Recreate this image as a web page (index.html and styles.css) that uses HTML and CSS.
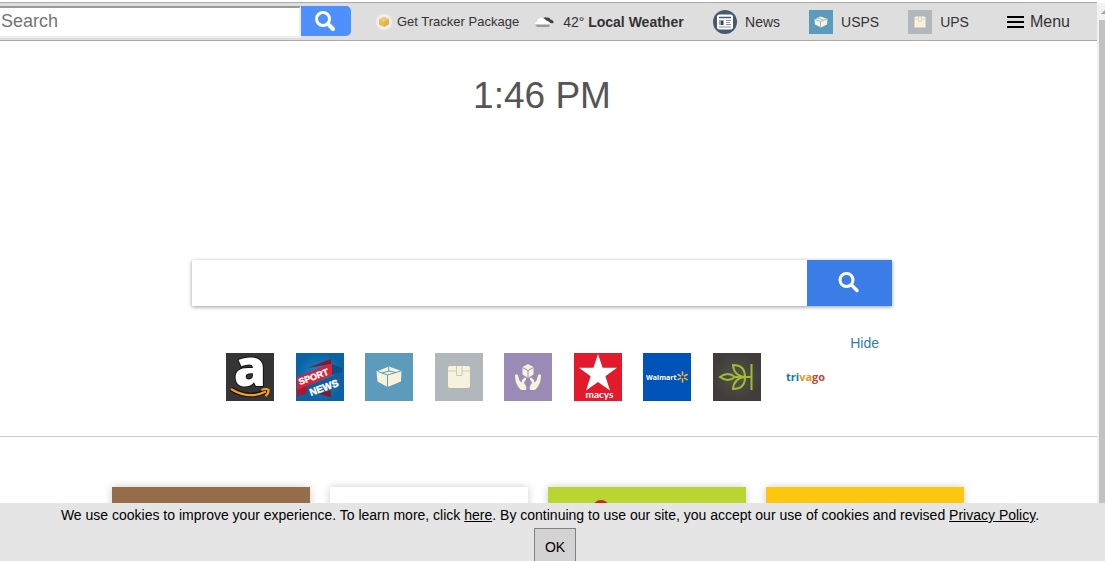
FILE: index.html
```html
<!DOCTYPE html>
<html lang="en">
<head>
<meta charset="utf-8">
<title>Package Tracker</title>
<link rel="stylesheet" href="styles.css">
</head>
<body>
<div class="window">
  <div class="page">
    <header class="toolbar">
      <form class="bar-search">
        <input class="bar-input" type="text" placeholder="Search" aria-label="Search">
        <button class="bar-button" type="button" aria-label="Search">
          <svg width="22" height="22" viewBox="1 0 22 22" fill="none" stroke="#fff" stroke-linecap="round"><circle cx="9" cy="9" r="6.500" stroke-width="3"/><path d="M14 14l5 5" stroke-width="4"/></svg>
        </button>
      </form>
      <a class="item tracker" href="#">
        <svg width="16" height="16" viewBox="0 0 16 16"><circle cx="8" cy="8" r="8" fill="#eee"/><path d="M3 5.500L8 3l5 2.200v5L8 13l-5-2.500z" fill="#e9bd55"/><path d="M3 5.500L8 3l5 2.200L8 8z" fill="#f0ca72"/><path d="M8 8v5l5-2.800v-5z" fill="#e3b14b"/></svg>
        <span>Get Tracker Package</span>
      </a>
      <a class="item weather" href="#">
        <svg width="21" height="14" viewBox="0 0 21 14"><path d="M9 4Q10 1.500 12.500 2.500Q16 2 16.500 4.500Q20 5 19.500 8Q17 9 15 7z" fill="#444"/><path d="M1 10Q0 7.500 3 7Q3 3.500 7.500 3Q11 3 12 5.500Q16 6 16 10z" fill="#fff"/><path d="M1 9.500h15l-1 2.500H3z" fill="#999"/></svg>
        <span>42° <b>Local Weather</b></span>
      </a>
      <nav class="links">
        <a class="item" href="#">
          <svg width="24" height="24" viewBox="0 0 24 24"><circle cx="12" cy="12" r="12" fill="#475873"/><rect x="4" y="4.500" width="16" height="15" rx="2.500" fill="#fff"/><path d="M6 7.500h12" stroke="#475873" stroke-width="1.500"/><path d="M13 10.500h5M13 12.500h4M13 14.500h5M6 17h12" stroke="#8792a3" stroke-width="1"/><path d="M6 10h5v5H6z" fill="#9aa5b5"/><path d="M8 11h2v4H8z" fill="#36455d"/></svg>
          <span>News</span>
        </a>
        <a class="item" href="#">
          <svg width="24" height="24" viewBox="0 0 48 48"><path fill="#5c9bbc" d="M0 0h48v48H0z"/><path d="M11 19l12-6 14 5-1 11-12 6-12-6z" fill="#f7f2dc"/><path d="M11 19l12 4 14-5M23 22v12M17 16l12 4" stroke="#9cbfc9" stroke-width="2" fill="none"/></svg>
          <span>USPS</span>
        </a>
        <a class="item" href="#">
          <svg width="24" height="24" viewBox="0 0 48 48"><path fill="#b1b7bb" d="M0 0h48v48H0z"/><rect x="13" y="13" width="22" height="22" rx="2" fill="#f7f2dc"/><path d="M13 18h8v5h6v-5h8M21 13v5M27 13v5" fill="none" stroke="#d2d1c7" stroke-width="1.500"/></svg>
          <span>UPS</span>
        </a>
      </nav>
      <button class="menu" type="button">
        <svg width="17" height="14" viewBox="0 0 17 14" fill="#000"><path d="M0 1h17v2H0zM0 6h17v2H0zM0 11h17v2H0z"/></svg>
        <span>Menu</span>
      </button>
    </header>

    <main class="content">
      <time class="clock">1:46 PM</time>
      <form class="main-search">
        <input class="main-input" type="text" aria-label="Search the web">
        <button class="main-button" type="button" aria-label="Search the web">
          <svg width="24" height="24" viewBox="0 0 24 24" fill="none" stroke="#fff" stroke-linecap="round"><circle cx="8.500" cy="9" r="6.500" stroke-width="3"/><path d="M13.500 14l5.500 5.500" stroke-width="3.500"/></svg>
        </button>
      </form>
      <div class="hide-row"><a class="hide" href="#">Hide</a></div>
      <nav class="tiles">
        <a class="tile" href="#" aria-label="Amazon">
          <svg class="logo" viewBox="0 0 48 48"><path fill="#353535" d="M0 0h48v48H0z"/><text x="24" y="33" text-anchor="middle" font-family="Open Sans, sans-serif" font-weight="800" font-size="52" fill="#fff" stroke="#111" stroke-width="2" paint-order="stroke">a</text><path d="M5 36Q23 47 41 38" fill="none" stroke="#111" stroke-width="4.500"/><path d="M5 36Q23 47 40 38.500M35.500 37q5-2 7 0q0 4-3 6" fill="none" stroke="#f99d1c" stroke-width="2.200"/></svg>
        </a>
        <a class="tile" href="#" aria-label="Sport News">
          <svg class="logo" viewBox="0 0 48 48"><defs><radialGradient id="sky"><stop stop-color="#1693d6"/><stop offset="1" stop-color="#0a62a4"/></radialGradient></defs><path fill="url(#sky)" d="M0 0h48v48H0z"/><path d="M11 15l24-9v5zM22 41l13-4v7z" fill="#8d1627"/><path d="M1 24l35-14v12L1 38z" fill="#d62338"/><path d="M11 33l35-14v13L11 46z" fill="#155c9f"/><path d="M1 37l10-4v7L1 44z" fill="#a41a30"/><path d="M36 11l10 4v4l-10 3z" fill="#104d89"/><g fill="#fff" stroke="#fff" stroke-width=".4" font-family="Liberation Sans, sans-serif" font-weight="700"><text transform="translate(4 32) rotate(-20)" font-size="9">SPORT</text><text transform="translate(15 43) rotate(-20)" font-size="10">NEWS</text></g></svg>
        </a>
        <a class="tile" href="#" aria-label="USPS">
          <svg class="logo" viewBox="0 0 48 48"><path fill="#5c9bbc" d="M0 0h48v48H0z"/><path d="M11.500 18.500L24 13.500l12.500 4.500-.5 10.500L22.500 34l-10-5.500z" fill="#f7f2dc"/><path d="M23.700 14v4.500M13 18.500l9.500 3.500L36 18M22.500 22v12M17 20l7-2 7 1.500" stroke="#5c9bbc" fill="none"/></svg>
        </a>
        <a class="tile" href="#" aria-label="UPS">
          <svg class="logo" viewBox="0 0 48 48"><path fill="#b1b7bb" d="M0 0h48v48H0z"/><rect x="13" y="13" width="22" height="22" rx="2" fill="#f7f2dc"/><path d="M13 18h8.500v4.500h5.500V18h8M21.500 13v5M27 13v5" fill="none" stroke="#c9cac4"/></svg>
        </a>
        <a class="tile" href="#" aria-label="Package care">
          <svg class="logo" viewBox="0 0 48 48"><path fill="#9a8ab5" d="M0 0h48v48H0z"/><g fill="#f7f2dc"><path d="M24 11l5.500 3v7.500L24 25l-5.500-3.500V14z"/><path id="hand" d="M11 22q2-1.500 3 .5l1.500 5 2 2q.5-3 3-5q1.500-.5 1.500 1.500l-2 4 2 3q.8 2 0 4h-5q-6-5-6-15z"/><use href="#hand" transform="matrix(-1 0 0 1 48 0)"/></g><path d="M18.500 14.500l5.500 3 5.500-3M24 17.500V25" fill="none" stroke="#9a8ab5"/></svg>
        </a>
        <a class="tile" href="#" aria-label="Macys">
          <svg class="logo" viewBox="0 0 48 48"><path fill="#e21a2c" d="M0 0h48v48H0z"/><path d="M24 1l4.600 13.800H43L31.400 23.300 36 37.500l-12-8.500-12 8.500 4.600-14.200L5 14.800h14.400z" fill="#fff"/><text x="25.500" y="44.500" text-anchor="middle" font-family="Lato, sans-serif" font-size="10" font-weight="700" fill="#fff">macys</text></svg>
        </a>
        <a class="tile" href="#" aria-label="Walmart">
          <svg class="logo" viewBox="0 0 48 48"><path fill="#0054b9" d="M0 0h48v48H0z"/><text x="3" y="27" font-family="Open Sans, sans-serif" font-size="7" font-weight="700" fill="#fff">Walmart</text><path d="M39.500 19v3M39.500 26v3M35 21.500l2.600 1.500M41.500 25.200l2.600 1.500M35 26.700l2.600-1.500M41.500 23l2.600-1.500" stroke="#fdbb30" stroke-width="1.500" stroke-linecap="round"/></svg>
        </a>
        <a class="tile" href="#" aria-label="Ancestry">
          <svg class="logo" viewBox="0 0 48 48"><defs><radialGradient id="soil"><stop stop-color="#55504b"/><stop offset="1" stop-color="#413d3a"/></radialGradient></defs><path fill="url(#soil)" d="M0 0h48v48H0z"/><path d="M38.500 11v26M38 24H22M7 24q8-6 15 0q-7 6-15 0zM20 12q12 0 12 12q-11-1-12-12zM20 36q12 0 12-12q-11 1-12 12z" fill="none" stroke="#9cbe30" stroke-width="2"/></svg>
        </a>
        <a class="tile" href="#" aria-label="Trivago">
          <svg class="logo" viewBox="0 0 48 48"><text x="4" y="28" font-family="Open Sans, sans-serif" font-size="11" font-weight="700"><tspan fill="#0a7fa5">tri</tspan><tspan fill="#f68e1e">va</tspan><tspan fill="#c6432f">go</tspan></text></svg>
        </a>
      </nav>
    </main>

    <section class="cards">
      <div class="card brown"></div>
      <div class="card white"></div>
      <div class="card lime"><svg width="16" height="16" viewBox="0 0 16 16"><circle cx="8" cy="8" r="8" fill="#cf2027"/></svg></div>
      <div class="card yellow"></div>
    </section>
  </div>
  <div class="scrollbar"><svg width="6" height="17" viewBox="0 0 6 17"><path d="M2 11l5-5v5z" fill="#a3a3a3"/></svg><div class="thumb"></div></div>
</div>
<aside class="cookies">
  <p class="notice">We use cookies to improve your experience. To learn more, click <a href="#">here</a>. By continuing to use our site, you accept our use of cookies and revised <a href="#">Privacy Policy</a>.</p>
  <button class="ok" type="button">OK</button>
</aside>
</body>
</html>
```

FILE: styles.css
```css
* { box-sizing: border-box; }
body {
  margin: 0;
  height: 100vh;
  overflow: hidden;
  background: #fff;
  color: #333;
  font: 14px/20px "Liberation Sans", Arial, sans-serif;
}
a { color: inherit; text-decoration: none; }
button { font: inherit; border: 0; padding: 0; cursor: pointer; }
svg { display: block; flex: none; }

.window { display: flex; height: 100%; padding-top: 2px; overflow: hidden; }
.page { flex: 1; min-width: 0; }

.toolbar {
  display: flex;
  align-items: center;
  height: 39px;
  padding-right: 27px;
  border: solid #aaa;
  border-width: 1px 0;
  background: #dedede;
  white-space: nowrap;
}
.bar-search { display: flex; align-items: flex-start; }
.bar-input {
  width: 301px;
  height: 32px;
  padding: 0 1px;
  border: solid #eee;
  border-width: 2px 2px 2px 0;
  border-top-color: #999;
  background: #fff;
  font: 18px "Liberation Sans", Arial, sans-serif;
}
.bar-input::placeholder { color: #757575; }
.bar-button {
  display: flex;
  align-items: center;
  justify-content: center;
  width: 50px;
  height: 30px;
  border-radius: 0 5px 5px 0;
  background: #4d90fe;
}
.item { display: flex; align-items: center; gap: 8px; }
.tracker { margin-left: 25px; gap: 5px; font-size: 13px; }
.weather { margin-left: 15px; }
.links { display: flex; gap: 29px; margin-left: auto; }
.menu {
  display: flex;
  align-items: center;
  gap: 6px;
  margin-left: 38px;
  background: none;
  color: #333;
  font-size: 16px;
}

.content {
  display: flex;
  flex-direction: column;
  align-items: center;
  padding: 33px 13px 35px 0;
  border-bottom: 1px solid #ccc;
}
.clock { font-size: 37px; line-height: 44px; color: #555; }
.main-search {
  display: flex;
  width: 100%;
  max-width: 700px;
  height: 46px;
  margin-top: 142px;
  box-shadow: 0 1px 4px rgba(0, 0, 0, .4);
}
.main-input { flex: 1; min-width: 0; border: 0; padding: 0 12px; font-size: 18px; }
.main-button {
  display: flex;
  align-items: center;
  justify-content: center;
  width: 85px;
  background: #3b7de6;
}
.hide-row { display: flex; justify-content: flex-end; width: 100%; max-width: 674px; margin-top: 27px; }
.hide { color: #337ab7; }
.tiles { display: flex; justify-content: space-between; width: 100%; max-width: 604px; margin-right: 28px; }
.tile { width: 48px; height: 48px; }
.logo { width: 48px; height: 48px; overflow: visible; }

.cards { display: flex; justify-content: center; gap: 20px; padding: 50px 21px 0 0; }
.card { width: 198px; height: 72px; box-shadow: 0 0 8px rgba(0, 0, 0, .2); }
.brown { background: #966d4b; }
.white { background: #fff; }
.lime { background: #b8d531; padding: 13px 45px; }
.yellow { background: #fbc70f; }

.scrollbar {
  display: flex;
  flex-direction: column;
  width: 8px;
  margin-top: 1px;
  padding-left: 2px;
  overflow: hidden;
  background: #f1f1f1;
}
.thumb { flex: 1; background: #c1c1c1; }

.cookies {
  position: fixed;
  left: 0;
  right: 0;
  bottom: 0;
  display: flex;
  flex-direction: column;
  align-items: center;
  height: 58px;
  padding-top: 2px;
  overflow: hidden;
  background: #e5e5e5;
  color: #000;
}
.notice { margin: 0 5px 0 0; }
.notice a { text-decoration: underline; }
.ok {
  flex: none;
  width: 42px;
  height: 36px;
  margin: 3px 0 0 5px;
  border: 1px solid #808080;
  border-bottom: 0;
  background: #d3d3d3;
  color: #000;
}
```
